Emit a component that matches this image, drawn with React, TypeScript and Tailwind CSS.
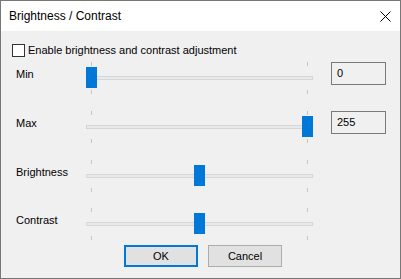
import React from "react";

type Row = { label: string; pos: number; value?: string };

const rows: Row[] = [
  { label: "Min", pos: 0, value: "0" },
  { label: "Max", pos: 216, value: "255" },
  { label: "Brightness", pos: 108 },
  { label: "Contrast", pos: 108 },
];

function Ticks() {
  return (
    <div className="flex h-[4px] justify-between px-[5px]">
      <div className="h-[4px] w-[1px] bg-[#c4c4c4]" />
      <div className="h-[4px] w-[1px] bg-[#c4c4c4]" />
    </div>
  );
}

function Slider({ pos }: { pos: number }) {
  return (
    <div className="flex h-[32px] w-[227px] flex-col">
      <Ticks />
      <div className="relative h-[24px]">
        <div className="mt-[10px] h-[4px] w-[227px] border border-[#d6d6d6] bg-[#e7eaea]" />
        <div
          className="absolute top-[1px] h-[21px] w-[11px] bg-[#0078d7]"
          style={{ left: pos }}
        />
      </div>
      <Ticks />
    </div>
  );
}

export default function App() {
  return (
    <div className="flex h-[279px] w-[401px] flex-col border border-[#777777] bg-[#f0f0f0] font-['Liberation_Sans',Arial,sans-serif] text-black">
      <div className="flex h-[30px] items-center justify-between bg-white pl-[8px] pr-[9px] text-[12px] leading-[16px]">
        <span>Brightness / Contrast</span>
        <svg width="11" height="11" viewBox="0 0 11 11">
          <path d="M0.5 0.5 L10.5 10.5 M10.5 0.5 L0.5 10.5" stroke="#000" strokeWidth="1" />
        </svg>
      </div>
      <div className="flex flex-col text-[11px] leading-[13px]">
        <div className="ml-[11px] mt-[13px] flex h-[13px] items-center gap-[3px]">
          <div className="h-[13px] w-[13px] border border-[#333333] bg-white" />
          <span>Enable brightness and contrast adjustment</span>
        </div>
        {rows.map((r, i) => (
          <div
            key={r.label}
            className={
              "ml-[15px] flex h-[32px] " +
              (i === 0 ? "mt-[5px]" : i === 3 ? "mt-[16px]" : "mt-[17px]")
            }
          >
            <div className="w-[70px] pt-[5px] leading-[14px]">{r.label}</div>
            <Slider pos={r.pos} />
            {r.value !== undefined && (
              <div className="ml-[18px] flex h-[23px] w-[55px] items-center border border-[#7a7a7a] bg-[#f0f0f0] pl-[5px]">
                {r.value}
              </div>
            )}
          </div>
        ))}
        <div className="mt-[5px] flex gap-[10px] pl-[123px]">
          <div className="flex h-[22px] w-[74px] items-center justify-center border-2 border-[#0078d7] bg-[#e1e1e1]">
            OK
          </div>
          <div className="flex h-[22px] w-[74px] items-center justify-center border border-[#adadad] bg-[#e1e1e1]">
            Cancel
          </div>
        </div>
      </div>
    </div>
  );
}
